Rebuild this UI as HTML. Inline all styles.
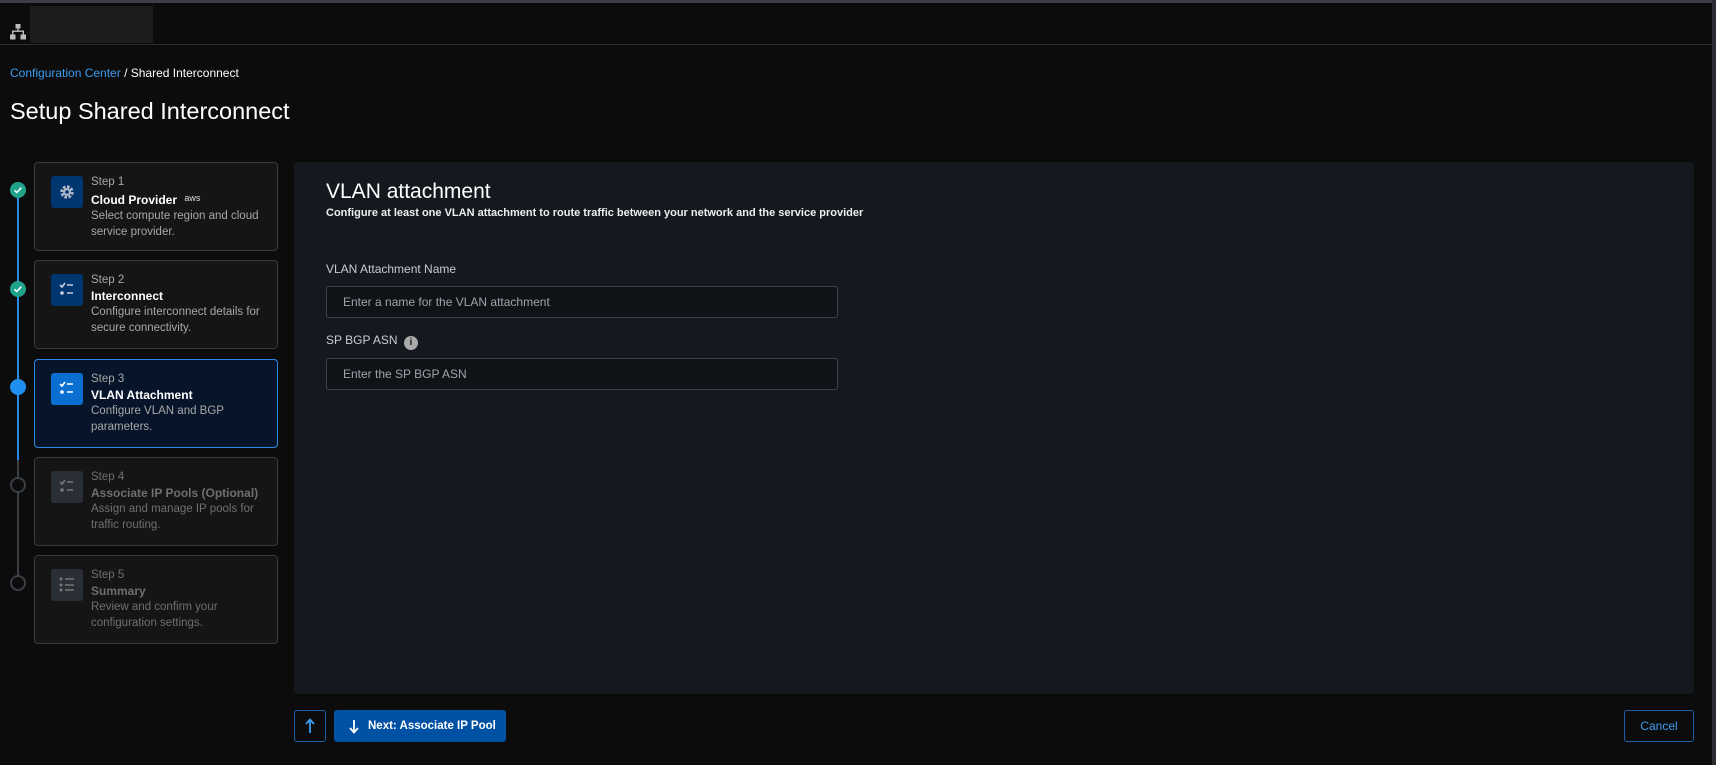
<!DOCTYPE html>
<html><head><meta charset="utf-8"><style>
*{box-sizing:border-box;margin:0;padding:0}
body{width:1716px;height:765px;background:#0c0c0c;font-family:"Liberation Sans",sans-serif;color:#fff;position:relative;overflow:hidden}
.abs{position:absolute}
.card{position:absolute;left:34px;width:244px;height:89px;border:1px solid #3a3a3a;border-radius:4px;background:#151515}
.ib{position:absolute;left:16px;top:13px;width:32px;height:32px;border-radius:3px;background:#00366f}
.txt{position:absolute;left:56px;top:11px;font-size:11.5px;line-height:16px;color:#a8a8a8}
.txt b{display:block;color:#fff;font-size:12px}
.dis .txt,.dis .txt b{color:#6f6f6f}
.dis .ib{background:#2a2f36}
.circ{position:absolute;left:10px;width:16px;height:16px;border-radius:50%}
.inp{position:absolute;left:326px;width:512px;height:32px;border:1px solid #3c424a;border-radius:3px;background:#0f1317;color:#a0a4aa;font-size:12px;padding:8px 16px}
.lbl{position:absolute;left:326px;font-size:12px;color:#c8ccd0}
</style></head><body>
<div class="abs" style="left:0;top:0;width:1716px;height:3px;background:#3b3f45"></div>
<div class="abs" style="left:0;top:44px;width:1716px;height:1px;background:#2c2c2c"></div>
<div class="abs" style="left:30px;top:6px;width:123px;height:37px;background:#1c1c1c"></div>
<svg class="abs" style="left:10px;top:24px" width="16" height="16" viewBox="0 0 16 16" fill="#bbb"><rect x="5.5" y="0" width="5" height="4.5"/><rect x="7.3" y="4" width="1.4" height="3"/><rect x="2" y="6.5" width="12" height="1.4"/><rect x="2" y="6.5" width="1.4" height="4"/><rect x="12.6" y="6.5" width="1.4" height="4"/><rect x="0" y="10.5" width="5.5" height="5"/><rect x="10.5" y="10.5" width="5.5" height="5"/></svg>
<div class="abs" style="left:10px;top:66px;font-size:12px"><span style="color:#3c9cf0">Configuration Center</span> <span style="color:#fff">/ Shared Interconnect</span></div>
<div class="abs" style="left:10px;top:98px;font-size:23.5px;color:#fff">Setup Shared Interconnect</div>

<div class="abs" style="left:17px;top:190px;width:2px;height:270px;background:#2a8ae8"></div>
<div class="abs" style="left:17px;top:460px;width:2px;height:123px;background:#3a3f46"></div>
<div class="circ" style="top:182px;background:#1fa38b"><svg width="16" height="16"><path d="M4.5 8.3l2.3 2.2 4.5-4.8" stroke="#fff" stroke-width="1.5" fill="none"/></svg></div>
<div class="circ" style="top:281px;background:#1fa38b"><svg width="16" height="16"><path d="M4.5 8.3l2.3 2.2 4.5-4.8" stroke="#fff" stroke-width="1.5" fill="none"/></svg></div>
<div class="circ" style="top:379px;background:#1f8ff0"></div>
<div class="circ" style="top:477px;background:#0c0c0c;border:2px solid #3a3f46"></div>
<div class="circ" style="top:575px;background:#0c0c0c;border:2px solid #3a3f46"></div>

<div class="card" style="top:162px"><div class="ib"><svg width="32" height="32"><circle cx="16" cy="16" r="5" fill="none" stroke="#aab4c4" stroke-width="3.5" stroke-dasharray="2.5 1.4"/><circle cx="16" cy="16" r="4" fill="#aab4c4"/><circle cx="16" cy="16" r="1.8" fill="#00366f"/></svg></div><div class="txt">Step 1<b>Cloud Provider <span style="font-size:9px;color:#ddd;vertical-align:3px;font-weight:normal;margin-left:4px">aws</span></b>Select compute region and cloud service provider.</div></div>
<div class="card" style="top:260px"><div class="ib"><svg width="32" height="32" stroke="#ccd" stroke-width="1.6" fill="none"><path d="M9 11l2 2 3-4M16 11h6M16 19h6"/><circle cx="11" cy="19" r="1.8" fill="#ccd" stroke="none"/></svg></div><div class="txt">Step 2<b>Interconnect</b>Configure interconnect details for secure connectivity.</div></div>
<div class="card" style="top:359px;background:#06152a;border-color:#2a8ae8"><div class="ib" style="background:#0a6fd0"><svg width="32" height="32" stroke="#fff" stroke-width="1.6" fill="none"><path d="M9 11l2 2 3-4M16 11h6M16 19h6"/><circle cx="11" cy="19" r="1.8" fill="#fff" stroke="none"/></svg></div><div class="txt">Step 3<b>VLAN Attachment</b>Configure VLAN and BGP parameters.</div></div>
<div class="card dis" style="top:457px"><div class="ib"><svg width="32" height="32" stroke="#777" stroke-width="1.6" fill="none"><path d="M9 11l2 2 3-4M16 11h6M16 19h6"/><circle cx="11" cy="19" r="1.8" fill="#777" stroke="none"/></svg></div><div class="txt">Step 4<b>Associate IP Pools (Optional)</b>Assign and manage IP pools for traffic routing.</div></div>
<div class="card dis" style="top:555px"><div class="ib"><svg width="32" height="32" stroke="#777" stroke-width="1.6" fill="#777"><circle cx="10" cy="10" r="1.5" stroke="none"/><circle cx="10" cy="16" r="1.5" stroke="none"/><circle cx="10" cy="21" r="1.5" stroke="none"/><path d="M14 10h9M14 16h9M14 21h9"/></svg></div><div class="txt">Step 5<b>Summary</b>Review and confirm your configuration settings.</div></div>

<div class="abs" style="left:294px;top:162px;width:1400px;height:532px;background:#141920;border-radius:4px"></div>
<div class="abs" style="left:326px;top:180px;font-size:21px">VLAN attachment</div>
<div class="abs" style="left:326px;top:207px;font-size:11px;font-weight:bold;color:#eee">Configure at least one VLAN attachment to route traffic between your network and the service provider</div>
<div class="lbl" style="top:262px">VLAN Attachment Name</div>
<div class="inp" style="top:286px">Enter a name for the VLAN attachment</div>
<div class="lbl" style="top:333px">SP BGP ASN <span style="display:inline-block;width:14px;height:14px;border-radius:50%;background:#aaa;color:#141920;font-size:10px;font-weight:bold;text-align:center;line-height:14px;vertical-align:-1px;margin-left:3px">i</span></div>
<div class="inp" style="top:358px">Enter the SP BGP ASN</div>

<div class="abs" style="left:294px;top:710px;width:32px;height:32px;border:1px solid #1f5ea8;border-radius:3px"><svg width="30" height="30"><path d="M15 22V9M11 13l4-4.5 4 4.5" stroke="#3c9cf0" stroke-width="1.8" fill="none"/></svg></div>
<div class="abs" style="left:334px;top:710px;width:172px;height:32px;background:#0050a4;border-radius:3px;font-size:11.5px;font-weight:bold;line-height:32px;padding-left:34px">Next: Associate IP Pool<svg class="abs" style="left:14px;top:8px" width="12" height="16"><path d="M6 2v12M2 10l4 4.5 4-4.5" stroke="#fff" stroke-width="1.8" fill="none"/></svg></div>
<div class="abs" style="left:1624px;top:710px;width:70px;height:32px;border:1px solid #1f5ea8;border-radius:3px;color:#3c9cf0;font-size:12px;text-align:center;line-height:30px">Cancel</div>
<div class="abs" style="left:1712px;top:0;width:4px;height:765px;background:#2a2d31"></div>
</body></html>
